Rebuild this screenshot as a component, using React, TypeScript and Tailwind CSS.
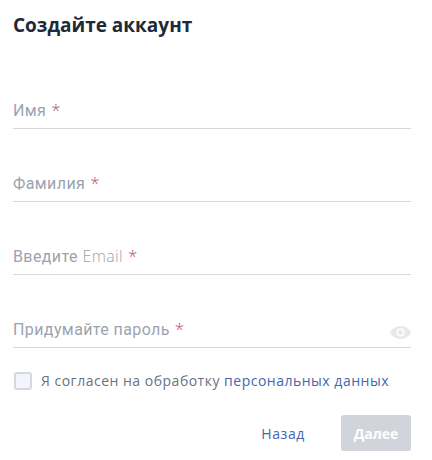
const fields = [
  { label: 'Имя' },
  { label: 'Фамилия' },
  { label: 'Введите', extra: 'Email' },
  { label: 'Придумайте пароль', password: true },
];

function EyeIcon() {
  return (
    <svg width="21" height="13" viewBox="0 0 21 13" fill="#e6e8ec">
      <path d="M10.500 0C6 0 2 2.500 0 6.500 2 10.500 6 13 10.500 13S19 10.500 21 6.500C19 2.500 15 0 10.500 0z" />
      <circle cx="10.500" cy="6.500" r="4" fill="white" />
      <circle cx="10.500" cy="6.500" r="2.400" />
    </svg>
  );
}

function Field({ label, extra, password }: { label: string; extra?: string; password?: boolean }) {
  return (
    <div className="h-[73px] flex items-end">
      <div className="relative w-full h-[29px] border-b border-[#d5d8de] font-['Roboto',sans-serif] text-[16px] leading-[20px] tracking-[0.4px] text-[#9ca3af]">
        <span>{label}</span>
        {extra && <span className="font-['Open_Sans',sans-serif] font-light"> {extra}</span>}
        <span className="ml-[5px] font-['Open_Sans',sans-serif] text-[17px] font-light text-[#b5476b]">*</span>
        {password && (
          <span className="absolute right-0 top-[7px] leading-none">
            <EyeIcon />
          </span>
        )}
      </div>
    </div>
  );
}

export default function App() {
  return (
    <div className="w-[432px] h-[460px] bg-white pl-[13px] pr-[21px] font-['Open_Sans',sans-serif] overflow-hidden">
      <h1 className="pt-[11px] h-[56px] text-[19px] leading-[28px] font-bold text-[#1f2937]">Создайте аккаунт</h1>
      {fields.map((f) => (
        <Field key={f.label} {...f} />
      ))}
      <div className="flex items-center mt-[23px] ml-px">
        <span className="w-[18px] h-[18px] rounded-[3px] border-2 border-[#d5d8e0] bg-[#f3f5fb]" />
        <span className="ml-[9px] text-[14px] leading-[20px] tracking-[0.5px] text-[#6b7280]">
          Я согласен на обработку <a className="text-[#4467ad]">персональных данных</a>
        </span>
      </div>
      <div className="flex justify-end items-center mt-[24px]">
        <a className="mr-[36px] text-[14px] text-[#4467ad] tracking-[0.6px]">Назад</a>
        <button className="w-[70px] h-[36px] rounded-[3px] bg-[#d1d5db] text-white text-[14px] font-bold">Далее</button>
      </div>
    </div>
  );
}
